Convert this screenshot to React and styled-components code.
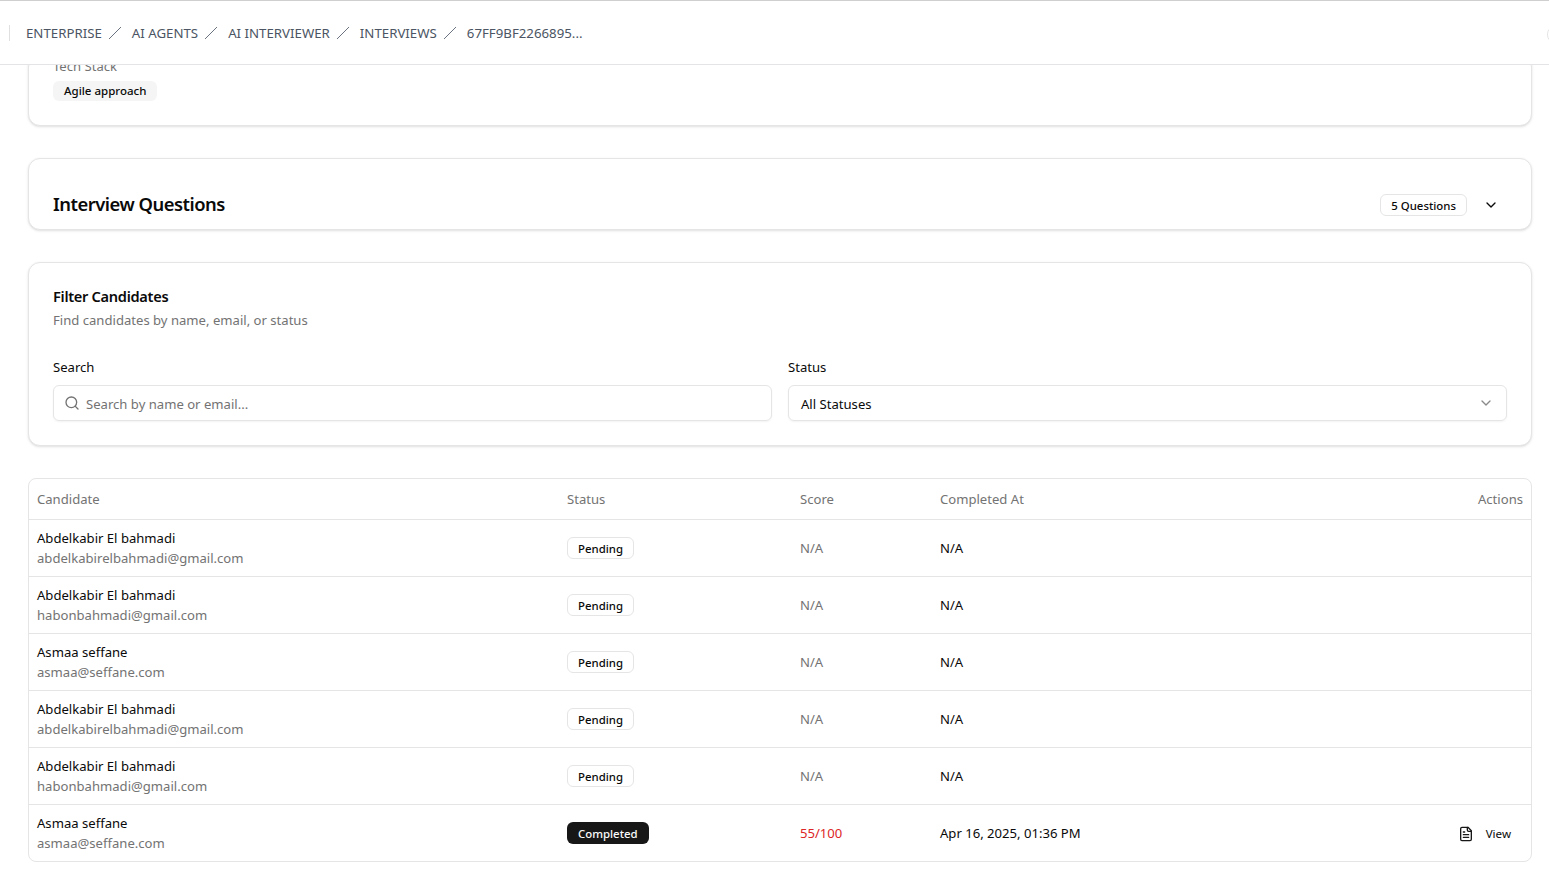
import React from "react";
import styled, { createGlobalStyle } from "styled-components";
import { ChevronDown, Search as SearchIcon } from "lucide-react";

const Global = createGlobalStyle`
  html, body { margin: 0; padding: 0; background: #fff; height: 100%; overflow: hidden; }
  body { font-family: "Noto Sans", "Open Sans", sans-serif; color: #0a0a0a; }
  * { box-sizing: border-box; }
`;

const Shell = styled.div`
  height: 893px;
  display: flex;
  flex-direction: column;
  overflow: hidden;
`;
const TopBar = styled.header`
  position: relative;
  flex: none;
  height: 65px;
  background: #fff;
  border-top: 1px solid #cfcfcf;
  border-bottom: 1px solid #e4e4e7;
  display: flex;
  align-items: center;
  padding-left: 9px;
  overflow: hidden;
`;
const Divider = styled.span`
  width: 1px;
  height: 16px;
  background: #e0e0e0;
  margin-right: 16px;
`;
const Crumbs = styled.nav`
  display: flex;
  align-items: center;
  font-size: 13.25px;
  color: #4b5563;
`;
const Crumb = styled.span`
  white-space: nowrap;
`;
const SlashBox = styled.svg`
  width: 14px;
  height: 14px;
  margin: 0 10px 0 6px;
  flex: none;
`;
const EdgeButton = styled.span`
  position: absolute;
  left: 1547px;
  top: 25px;
  width: 36px;
  height: 17px;
  border: 1px solid #e5e5e5;
  border-radius: 8px;
`;
const Main = styled.main`
  flex: 1;
  overflow: hidden;
  padding: 0 17px 0 28px;
  display: flex;
  flex-direction: column;
  gap: 32px;
`;
const Card = styled.section`
  background: #fff;
  border: 1px solid #e5e5e5;
  border-radius: 12px;
  box-shadow: 0 1px 3px rgba(0, 0, 0, 0.1), 0 1px 2px -1px rgba(0, 0, 0, 0.1);
`;
const TechCard = styled(Card)`
  margin-top: -10px;
  height: 71px;
  padding: 0 24px;
  flex: none;
`;
const MutedLabel = styled.div`
  font-size: 13.1px;
  line-height: 20px;
  color: #737373;
`;
const Chip = styled.span`
  display: inline-block;
  margin-top: 5px;
  height: 20px;
  line-height: 20px;
  padding: 0 11px;
  border-radius: 6px;
  background: #f5f5f5;
  font-size: 11.5px;
  font-weight: 500;
`;
const QuestionsCard = styled(Card)`
  flex: none;
  height: 72px;
  padding: 23px 24px 0;
  display: flex;
  align-items: flex-start;
  justify-content: space-between;
`;
const BigTitle = styled.h2`
  margin: 0;
  font-size: 18.4px;
  line-height: 44px;
  font-weight: 600;
  letter-spacing: -0.5px;
`;
const QuestionsRight = styled.div`
  display: flex;
  align-items: center;
  gap: 16px;
  margin-top: 12px;
  padding-right: 8px;
`;
const Outline = styled.span`
  display: inline-block;
  height: 22px;
  line-height: 21px;
  padding: 0 10px;
  border: 1px solid #e5e5e5;
  border-radius: 6px;
  background: #fff;
  font-size: 11.4px;
  font-weight: 500;
  white-space: nowrap;
`;
const FilterCard = styled(Card)`
  flex: none;
  height: 184px;
  padding: 22px 24px 0;
`;
const FilterTitle = styled.h3`
  margin: 0;
  font-size: 14.6px;
  line-height: 22px;
  font-weight: 600;
  letter-spacing: -0.3px;
`;
const FilterSub = styled.p`
  margin: 1px 0 0;
  font-size: 13.1px;
  line-height: 24px;
  color: #737373;
`;
const FilterGrid = styled.div`
  display: grid;
  grid-template-columns: 1fr 1fr;
  gap: 16px;
  margin-top: 25px;
`;
const Field = styled.div`
  display: flex;
  flex-direction: column;
  gap: 8px;
`;
const FieldLabel = styled.label`
  font-size: 13.1px;
  line-height: 20px;
`;
const InputBox = styled.div`
  height: 36px;
  border: 1px solid #e5e5e5;
  border-radius: 6px;
  display: flex;
  align-items: center;
  justify-content: ${(p) => (p.$between ? "space-between" : "flex-start")};
  gap: 6px;
  padding: 0 12px 0 ${(p) => (p.$between ? "12px" : "10px")};
  font-size: 13.1px;
  box-shadow: 0 1px 2px rgba(0, 0, 0, 0.05);
  color: ${(p) => (p.$muted ? "#737373" : "#0a0a0a")};
`;
const InputText = styled.span`
  padding-top: 2px;
`;
const TableWrap = styled.div`
  flex: none;
  border: 1px solid #e5e5e5;
  border-radius: 8px;
  overflow: hidden;
`;
const Table = styled.table`
  width: 100%;
  border-collapse: collapse;
  table-layout: fixed;
  font-size: 13.1px;
`;
const Th = styled.th`
  height: 40px;
  padding: 0 8px;
  text-align: ${(p) => (p.$right ? "right" : "left")};
  font-weight: 400;
  color: #737373;
  border-bottom: 1px solid #e5e5e5;
`;
const Tr = styled.tr`
  height: 57px;
  border-bottom: 1px solid #e5e5e5;
  &:last-child { border-bottom: 0; }
`;
const Td = styled.td`
  padding: 0 8px;
  color: ${(p) => p.$color || "#0a0a0a"};
  text-align: ${(p) => (p.$right ? "right" : "left")};
`;
const Name = styled.div`
  line-height: 20px;
`;
const Email = styled.div`
  line-height: 20px;
  color: #737373;
`;
const Badge = styled.span`
  display: inline-block;
  vertical-align: middle;
  height: 22px;
  line-height: 21px;
  padding: 0 10px;
  border: 1px solid ${(p) => (p.$done ? "transparent" : "#e5e5e5")};
  border-radius: 6px;
  background: ${(p) => (p.$done ? "#171717" : "#fff")};
  color: ${(p) => (p.$done ? "#fafafa" : "#0a0a0a")};
  font-size: 11.4px;
  font-weight: 500;
`;
const ViewButton = styled.span`
  display: inline-flex;
  vertical-align: middle;
  align-items: center;
  gap: 12px;
  font-size: 11.6px;
  padding-right: 12px;
`;

const Slash = () => (
  <SlashBox viewBox="0 0 14 14" fill="none">
    <line x1="1" y1="13" x2="13" y2="1" stroke="#6b7280" strokeWidth="1" />
  </SlashBox>
);

const FileIcon = () => (
  <svg width="16" height="16" viewBox="0 0 24 24" fill="none" stroke="#171717" strokeWidth="2" strokeLinecap="round" strokeLinejoin="round">
    <path d="M15 2H6a2 2 0 0 0-2 2v16a2 2 0 0 0 2 2h12a2 2 0 0 0 2-2V7z" />
    <path d="M14 2v4a2 2 0 0 0 2 2h4" />
    <path d="M10 9H8" />
    <path d="M16 13H8" />
    <path d="M16 17H8" />
  </svg>
);

const crumbs = ["ENTERPRISE", "AI AGENTS", "AI INTERVIEWER", "INTERVIEWS", "67FF9BF2266895..."];
const rows = [
  ["Abdelkabir El bahmadi", "abdelkabirelbahmadi@gmail.com"],
  ["Abdelkabir El bahmadi", "habonbahmadi@gmail.com"],
  ["Asmaa seffane", "asmaa@seffane.com"],
  ["Abdelkabir El bahmadi", "abdelkabirelbahmadi@gmail.com"],
  ["Abdelkabir El bahmadi", "habonbahmadi@gmail.com"],
];

export default function App() {
  return (
    <Shell>
      <Global />
      <TopBar>
        <Divider />
        <Crumbs>
          {crumbs.map((c, i) => (
            <React.Fragment key={c}>
              <Crumb>{c}</Crumb>
              {i < crumbs.length - 1 && <Slash />}
            </React.Fragment>
          ))}
        </Crumbs>
        <EdgeButton />
      </TopBar>
      <Main>
        <TechCard>
          <MutedLabel>Tech Stack</MutedLabel>
          <Chip>Agile approach</Chip>
        </TechCard>
        <QuestionsCard>
          <BigTitle>Interview Questions</BigTitle>
          <QuestionsRight>
            <Outline>5 Questions</Outline>
            <ChevronDown size={16} strokeWidth={2} />
          </QuestionsRight>
        </QuestionsCard>
        <FilterCard>
          <FilterTitle>Filter Candidates</FilterTitle>
          <FilterSub>Find candidates by name, email, or status</FilterSub>
          <FilterGrid>
            <Field>
              <FieldLabel>Search</FieldLabel>
              <InputBox $muted>
                <SearchIcon size={16} strokeWidth={2} />
                <InputText>Search by name or email...</InputText>
              </InputBox>
            </Field>
            <Field>
              <FieldLabel>Status</FieldLabel>
              <InputBox $between>
                <InputText>All Statuses</InputText>
                <ChevronDown size={16} strokeWidth={2} color="#8a8a8a" />
              </InputBox>
            </Field>
          </FilterGrid>
        </FilterCard>
        <TableWrap>
          <Table>
            <colgroup>
              <col style={{ width: 530 }} />
              <col style={{ width: 233 }} />
              <col style={{ width: 140 }} />
              <col />
              <col style={{ width: 120 }} />
            </colgroup>
            <thead>
              <tr>
                <Th>Candidate</Th>
                <Th>Status</Th>
                <Th>Score</Th>
                <Th>Completed At</Th>
                <Th $right>Actions</Th>
              </tr>
            </thead>
            <tbody>
              {rows.map((r, i) => (
                <Tr key={i}>
                  <Td>
                    <Name>{r[0]}</Name>
                    <Email>{r[1]}</Email>
                  </Td>
                  <Td><Badge>Pending</Badge></Td>
                  <Td $color="#737373">N/A</Td>
                  <Td>N/A</Td>
                  <Td />
                </Tr>
              ))}
              <Tr>
                <Td>
                  <Name>Asmaa seffane</Name>
                  <Email>asmaa@seffane.com</Email>
                </Td>
                <Td><Badge $done>Completed</Badge></Td>
                <Td $color="#dc2626">55/100</Td>
                <Td>Apr 16, 2025, 01:36 PM</Td>
                <Td $right>
                  <ViewButton><FileIcon />View</ViewButton>
                </Td>
              </Tr>
            </tbody>
          </Table>
        </TableWrap>
      </Main>
    </Shell>
  );
}
